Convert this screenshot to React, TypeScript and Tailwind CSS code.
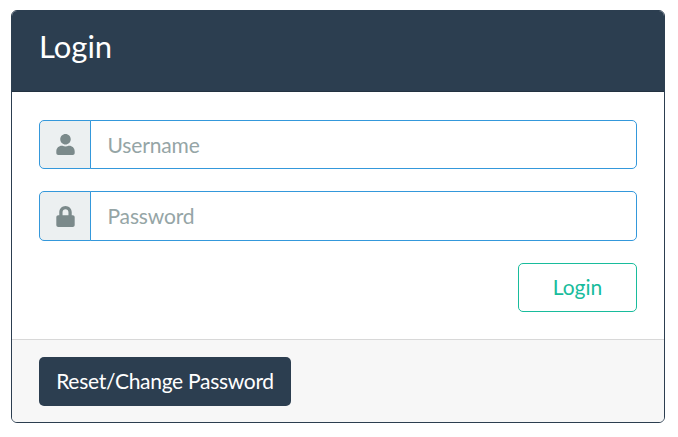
import React from "react";
import { FaUser, FaLock } from "react-icons/fa";

function Field({ icon, placeholder, type, className, iconClass, inputClass }: { icon: React.ReactNode; placeholder: string; type: string; className: string; iconClass: string; inputClass: string }) {
  return (
    <div className={`flex ${className}`}>
      <span className={`flex w-[52px] shrink-0 items-center justify-center rounded-l-[5px] border border-[#3498db] bg-[#ecf0f1] text-[21px] text-[#7b8a8b] ${iconClass}`}>{icon}</span>
      <input type={type} placeholder={placeholder} className={`-ml-px min-w-0 flex-1 rounded-r-[5px] border border-[#3498db] bg-white px-[16.5px] tracking-[-0.15px] text-[#7b8a8b] outline-none placeholder:text-[#95a5a6] placeholder:opacity-100 ${inputClass}`} />
    </div>
  );
}

export default function App() {
  return (
    <div className="h-[437px] bg-white pt-[10px] pl-[11px] font-['Lato',sans-serif] text-[21px] leading-[31px]">
      <div className="flex h-[413px] w-[654px] flex-col overflow-hidden rounded-[6px] border border-[#2c3e50] bg-white">
        <header className="h-[81px] border-b border-[#233240] bg-[#2c3e50] px-[27px] pt-[16px] text-white">
          <h1 className="text-[31px] leading-[38px]">Login</h1>
        </header>
        <form className="flex h-[247px] flex-col px-[27px] pt-[28px]">
          <Field icon={<FaUser />} placeholder="Username" type="text" className="h-[49px]" iconClass="pb-px" inputClass="" />
          <Field icon={<FaLock />} placeholder="Password" type="password" className="mt-[22px] h-[50px]" iconClass="pt-px" inputClass="pb-[2px]" />
          <button type="button" className="mt-[22px] h-[49px] w-[119px] self-end rounded-[5px] border border-[#18bc9c] pb-[2px] text-[#18bc9c]">Login</button>
        </form>
        <footer className="flex-1 border-t border-[#d8d8d8] bg-[#f7f7f7] px-[27px] pt-[17px]">
          <button type="button" className="h-[49px] w-[252px] rounded-[5px] bg-[#2c3e50] pb-[2px] tracking-[-0.29px] text-white">Reset/Change Password</button>
        </footer>
      </div>
    </div>
  );
}
